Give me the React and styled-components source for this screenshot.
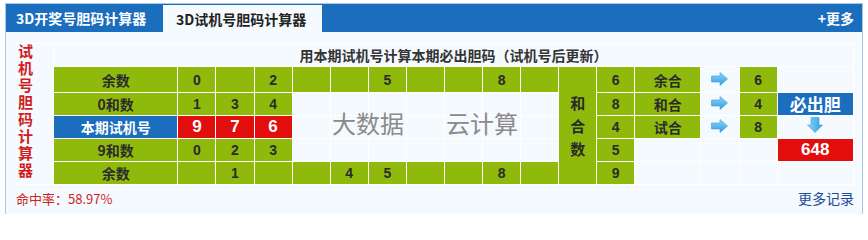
import styled, { createGlobalStyle } from "styled-components";

const GlobalStyle = createGlobalStyle`
  html, body {
    margin: 0;
    padding: 0;
    background: #ffffff;
  }
  body {
    font-family: "Liberation Sans", "Noto Sans CJK SC", sans-serif;
  }
`;

const GREEN = "#8fba0b";
const BLUE = "#1a6ebd";
const RED = "#e20e0e";

const Box = styled.div`
  margin: 3px 0 0 5px;
  width: 856px;
  height: 210px;
  border: 1px solid #a9c6e4;
  border-bottom: none;
  background: #f5faff;
`;

const Head = styled.div`
  display: flex;
  align-items: stretch;
  height: 28px;
  background: ${BLUE};
`;

const Tab = styled.div`
  display: flex;
  align-items: center;
  padding: 0 0 0 ${(p) => (p.$active ? "13px" : "10px")};
  width: ${(p) => (p.$active ? "146px" : "147px")};
  margin-top: ${(p) => (p.$active ? "1px" : "0")};
  background: ${(p) => (p.$active ? "#f5faff" : "transparent")};
  color: ${(p) => (p.$active ? "#222" : "#fff")};
  font-family: "Noto Sans CJK SC", sans-serif;
  font-weight: bold;
  font-size: 14px;
`;

const More = styled.div`
  margin-left: auto;
  padding-right: 8px;
  display: flex;
  align-items: center;
  color: #fff;
  font-family: "Noto Sans CJK SC", sans-serif;
  font-weight: bold;
  font-size: 14px;
`;

const Body = styled.div`
  padding: 11px 0 0 10px;
`;

const TableWrap = styled.div`
  position: relative;
  width: 838px;
`;

const Grid = styled.table`
  border-collapse: separate;
  border-spacing: 1px;
  background: #ffffff;
  table-layout: fixed;
  width: 838px;
`;

const Cell = styled.td`
  height: 22px;
  padding: 0;
  text-align: center;
  vertical-align: middle;
  background: ${(p) =>
    p.$tone === "green"
      ? GREEN
      : p.$tone === "blue"
      ? BLUE
      : p.$tone === "red"
      ? RED
      : "#f5faff"};
  color: ${(p) => (p.$tone === "blue" || p.$tone === "red" ? "#fff" : "#2b2b2b")};
  font-family: "Noto Sans CJK SC", sans-serif;
  font-weight: bold;
  font-size: ${(p) => (p.$big ? "17px" : "14px")};
  line-height: 22px;
`;

const Digit = styled(Cell)`
  font-family: "Liberation Sans", sans-serif;
`;

const SideTitle = styled.td`
  padding: 0;
  background: #f5faff;
  text-align: left;
  vertical-align: middle;
`;

const SideText = styled.span`
  display: inline-block;
  writing-mode: vertical-rl;
  text-orientation: upright;
  letter-spacing: 2px;
  color: #d21d1d;
  font-family: "Noto Sans CJK SC", sans-serif;
  font-weight: bold;
  font-size: 15px;
  line-height: 16px;
`;

const Caption = styled.td`
  height: 22px;
  padding: 0;
  background: #f5faff;
  text-align: center;
  color: #333;
  font-family: "Noto Sans CJK SC", sans-serif;
  font-weight: bold;
  font-size: 14px;
`;

const VerticalWord = styled.td`
  padding: 0;
  background: ${GREEN};
  color: #2b2b2b;
  font-family: "Noto Sans CJK SC", sans-serif;
  font-weight: bold;
  font-size: 15px;
  line-height: 23px;
  text-align: center;
  vertical-align: middle;
`;

const Watermark = styled.div`
  position: absolute;
  top: 62px;
  left: ${(p) => p.$left}px;
  color: #8a8a8a;
  font-family: "Noto Sans CJK SC", sans-serif;
  font-size: 24px;
  pointer-events: none;
`;

const Foot = styled.div`
  display: flex;
  justify-content: space-between;
  align-items: center;
  padding: 3px 8px 0 0;
  font-family: "Noto Sans CJK SC", sans-serif;
  font-size: 13px;
`;

const Rate = styled.span`
  color: #cf2424;
`;

const Record = styled.span`
  color: #1d4b98;
  font-size: 14px;
`;

const RightArrow = () => (
  <svg width="17" height="14" viewBox="0 0 17 14">
    <defs>
      <linearGradient id="ra" x1="0" y1="0" x2="0" y2="1">
        <stop offset="0" stopColor="#8fd6fb" />
        <stop offset="1" stopColor="#2f9be0" />
      </linearGradient>
    </defs>
    <path d="M0.5 4 H9 V0.5 L16.5 7 L9 13.5 V10 H0.5 Z" fill="url(#ra)" stroke="#3d9fd8" strokeWidth="0.6" />
  </svg>
);

const DownArrow = () => (
  <svg width="16" height="16" viewBox="0 0 16 16">
    <defs>
      <linearGradient id="da" x1="0" y1="0" x2="1" y2="0">
        <stop offset="0" stopColor="#8fd6fb" />
        <stop offset="1" stopColor="#2f9be0" />
      </linearGradient>
    </defs>
    <path d="M4 0.5 V8 H0.5 L8 15.5 L15.5 8 H12 V0.5 Z" fill="url(#da)" stroke="#3d9fd8" strokeWidth="0.6" />
  </svg>
);

const topRemain = [0, 2, 5, 8];
const bottomRemain = [1, 4, 5, 8];
const digits = [0, 1, 2, 3, 4, 5, 6, 7, 8, 9];

const widths = [36, 123, ...digits.map(() => 37), 37, 37, 65, 37, 37, 75];

const App = () => {
  return (
    <>
      <GlobalStyle />
      <Box>
        <Head>
          <Tab>3D开奖号胆码计算器</Tab>
          <Tab $active>3D试机号胆码计算器</Tab>
          <More>+更多</More>
        </Head>
        <Body>
          <TableWrap>
            <Grid>
              <colgroup>
                {widths.map((w, i) => (
                  <col key={i} style={{ width: w }} />
                ))}
              </colgroup>
              <tbody>
                <tr>
                  <SideTitle rowSpan={6}>
                    <SideText>试机号胆码计算器</SideText>
                  </SideTitle>
                  <Caption colSpan={17}>用本期试机号计算本期必出胆码（试机号后更新）</Caption>
                </tr>
                <tr>
                  <Cell $tone="green">余数</Cell>
                  {digits.map((d) => (
                    <Digit key={d} $tone="green">
                      {topRemain.includes(d) ? d : ""}
                    </Digit>
                  ))}
                  <VerticalWord rowSpan={5}>
                    和<br />合<br />数
                  </VerticalWord>
                  <Digit $tone="green">6</Digit>
                  <Cell $tone="green">余合</Cell>
                  <Cell><RightArrow /></Cell>
                  <Digit $tone="green">6</Digit>
                  <Cell />
                </tr>
                <tr>
                  <Cell $tone="green">0和数</Cell>
                  {digits.map((d) => (
                    <Digit key={d} $tone={d < 3 ? "green" : undefined}>
                      {d < 3 ? [1, 3, 4][d] : ""}
                    </Digit>
                  ))}
                  <Digit $tone="green">8</Digit>
                  <Cell $tone="green">和合</Cell>
                  <Cell><RightArrow /></Cell>
                  <Digit $tone="green">4</Digit>
                  <Cell $tone="blue" $big>必出胆</Cell>
                </tr>
                <tr>
                  <Cell $tone="blue">本期试机号</Cell>
                  {digits.map((d) => (
                    <Digit key={d} $tone={d < 3 ? "red" : undefined} $big>
                      {d < 3 ? [9, 7, 6][d] : ""}
                    </Digit>
                  ))}
                  <Digit $tone="green">4</Digit>
                  <Cell $tone="green">试合</Cell>
                  <Cell><RightArrow /></Cell>
                  <Digit $tone="green">8</Digit>
                  <Cell><DownArrow /></Cell>
                </tr>
                <tr>
                  <Cell $tone="green">9和数</Cell>
                  {digits.map((d) => (
                    <Digit key={d} $tone={d < 3 ? "green" : undefined}>
                      {d < 3 ? [0, 2, 3][d] : ""}
                    </Digit>
                  ))}
                  <Digit $tone="green">5</Digit>
                  <Cell />
                  <Cell />
                  <Cell />
                  <Digit $tone="red" $big>648</Digit>
                </tr>
                <tr>
                  <Cell $tone="green">余数</Cell>
                  {digits.map((d) => (
                    <Digit key={d} $tone="green">
                      {bottomRemain.includes(d) ? d : ""}
                    </Digit>
                  ))}
                  <Digit $tone="green">9</Digit>
                  <Cell />
                  <Cell />
                  <Cell />
                  <Cell />
                </tr>
              </tbody>
            </Grid>
            <Watermark $left={316}>大数据</Watermark>
            <Watermark $left={430}>云计算</Watermark>
          </TableWrap>
          <Foot>
            <Rate>命中率：58.97%</Rate>
            <Record>更多记录</Record>
          </Foot>
        </Body>
      </Box>
    </>
  );
};

export default App;
